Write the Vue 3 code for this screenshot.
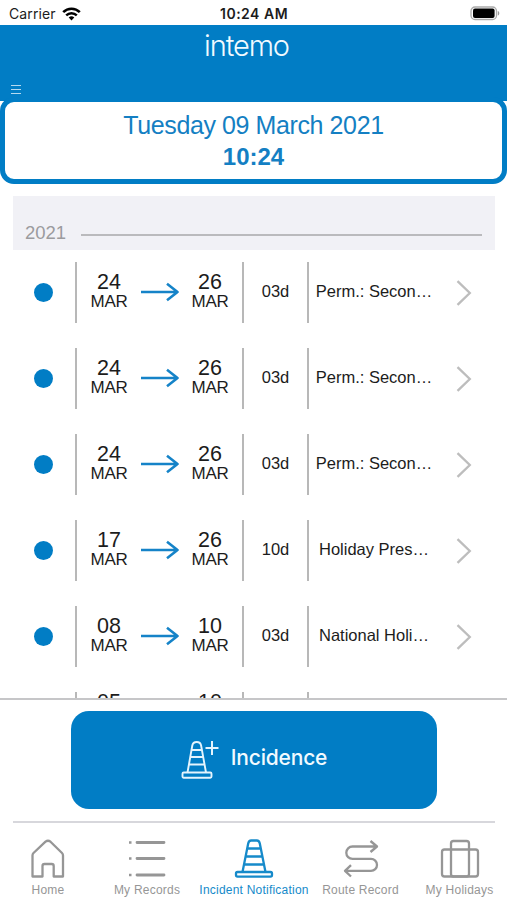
<script setup>
const incidents = [
  { from: '24', to: '26', fromMonth: 'MAR', toMonth: 'MAR', days: '03d', label: 'Perm.: Secon…' },
  { from: '24', to: '26', fromMonth: 'MAR', toMonth: 'MAR', days: '03d', label: 'Perm.: Secon…' },
  { from: '24', to: '26', fromMonth: 'MAR', toMonth: 'MAR', days: '03d', label: 'Perm.: Secon…' },
  { from: '17', to: '26', fromMonth: 'MAR', toMonth: 'MAR', days: '10d', label: 'Holiday Pres…' },
  { from: '08', to: '10', fromMonth: 'MAR', toMonth: 'MAR', days: '03d', label: 'National Holi…' },
]
</script>

<template>
  <div class="screen">
    <div class="status">
      <div class="carrier">
        <span>Carrier</span>
        <svg width="19" height="14" viewBox="0 0 19 14" fill="none" stroke="#000">
          <path d="M1.2 5.2a11.8 11.8 0 0 1 16.6 0" stroke-width="2.6" />
          <path d="M4.2 8.4a7.5 7.5 0 0 1 10.6 0" stroke-width="2.4" />
          <path d="M9.5 13.6l-2.8-3a4 4 0 0 1 5.6 0z" fill="#000" stroke="none" />
        </svg>
      </div>
      <div class="clock">10:24 AM</div>
      <svg class="battery" width="31" height="15" viewBox="0 0 31 15">
        <rect x="2" y="1" width="25.500" height="12.500" rx="4" fill="#fff" stroke="#aaa" stroke-width="1.3" />
        <rect x="4" y="2.600" width="21.600" height="9.300" rx="2" fill="#000" />
        <path d="M28.800 5c2 .6 2 4 0 4.600z" fill="#999" />
      </svg>
    </div>

    <header class="header">
      <div class="logo">intemo</div>
      <svg class="menu" width="10" height="11" viewBox="0 0 10 11" stroke="#b5daf0" stroke-width="1">
        <path d="M0 .5h10M0 4.500h10M0 8.500h10" />
      </svg>
    </header>

    <section class="now">
      <div class="date">Tuesday 09 March 2021</div>
      <div class="time">10:24</div>
    </section>

    <div class="year"><span>2021</span><i></i></div>

    <main class="list">
      <div v-for="(item, i) in incidents" :key="i" class="row">
        <div class="dot-cell"><span class="dot"></span></div>
        <div class="range">
          <div class="day"><b>{{ item.from }}</b><span>{{ item.fromMonth }}</span></div>
          <svg class="arrow" width="38" height="20" viewBox="0 0 38 20" fill="none" stroke="#1583c8" stroke-width="2.600">
            <path d="M0 10h36M26 1.800L36.500 10L26 18.200" stroke-linejoin="round" />
          </svg>
          <div class="day"><b>{{ item.to }}</b><span>{{ item.toMonth }}</span></div>
        </div>
        <div class="days">{{ item.days }}</div>
        <div class="kind">{{ item.label }}</div>
        <svg class="chevron" width="16" height="26" viewBox="0 0 16 26" fill="none" stroke="#bdbdbd" stroke-width="2.300">
          <path d="M1.500 1.200L13.800 13L1.500 24.800" />
        </svg>
      </div>
      <div class="row partial">
        <div class="dot-cell"></div>
        <div class="range">
          <div class="day"><b>05</b></div>
          <span class="arrow"></span>
          <div class="day"><b>10</b></div>
        </div>
        <div class="days"></div>
        <div class="kind"></div>
      </div>
    </main>

    <div class="action">
      <button class="button">
        <svg width="38" height="40" viewBox="0 0 38 40" fill="none" stroke="#e4f4fd" stroke-width="1.900" stroke-linejoin="round">
          <path d="M6.500 32.500L11.300 5.500Q11.900 2 15.700 2Q19.500 2 20.100 5.500L25 32.500M11 10H20.500M10 17H21.700M8.500 24.500H23.200" />
          <rect x="1.500" y="32.500" width="29" height="5.300" rx="1.200" />
          <path d="M31 1v14M24.500 8h13" stroke-width="2" />
        </svg>
        <span>Incidence</span>
      </button>
    </div>

    <nav class="tabs">
      <div class="tab home">
        <svg width="36" height="40" viewBox="0 0 36 40">
          <path d="M2.500 37.500V16.500Q2.500 15 3.500 14L15.500 2.700Q18 .8 20.500 2.700L32 14Q33 15 33 16.500V37.500H23.700V27Q23.700 25 21.700 25H14.500Q12.500 25 12.500 27V37.500Z" />
        </svg>
        <span>Home</span>
      </div>
      <div class="tab records">
        <svg width="38" height="40" viewBox="0 0 38 40">
          <path d="M9 3.500H36M9 19.500H36M9 36H36" stroke-width="2.800" stroke-linecap="round" />
          <path d="M1 3.500h2.500M1 19.500h2.500M1 36h2.500" stroke-width="2.400" />
        </svg>
        <span>My Records</span>
      </div>
      <div class="tab incident active">
        <svg width="40" height="40" viewBox="0 0 40 40">
          <path d="M8.500 33L14.200 4.500Q14.800 1.500 17.200 1.500H22.800Q25.200 1.500 25.800 4.500L31.500 33M13.500 9.500H26.500M12 17.500H28M10.500 25.500H29.700" />
          <rect x="2" y="33" width="36" height="4.600" rx="1.500" />
        </svg>
        <span>Incident Notification</span>
      </div>
      <div class="tab route">
        <svg width="38" height="40" viewBox="0 0 38 40">
          <path d="M34 7.500H10.500A6.200 6.200 0 0 0 10.500 19.900H29A6 6 0 0 1 29 31.900H4M28.500 2L35 7.500L28.500 13M9 26.200L3 31.900L9 37.500" />
        </svg>
        <span>Route Record</span>
      </div>
      <div class="tab holidays">
        <svg width="40" height="40" viewBox="0 0 40 40">
          <rect x="2" y="10.500" width="36" height="27" rx="2.500" />
          <rect x="11" y="2" width="18" height="35.500" rx="2.500" />
        </svg>
        <span>My Holidays</span>
      </div>
    </nav>
  </div>
</template>

<style>
body {
  margin: 0;
  background: #fff;
}
</style>

<style scoped>
.screen {
  width: 507px;
  height: 900px;
  overflow: hidden;
  display: flex;
  flex-direction: column;
  background: #fff;
  font-family: "Liberation Sans", Arial, sans-serif;
  color: #1c1c1c;
}
.status {
  height: 25px;
  flex: none;
  display: grid;
  grid-template-columns: 1fr 69px 1fr;
  align-items: center;
  padding: 2px 7px 0 9px;
  box-sizing: border-box;
  font: 14px/20px Inter, sans-serif;
}
.carrier {
  display: flex;
  align-items: center;
  gap: 6px;
  letter-spacing: 0.1px;
}
.clock {
  font-weight: 600;
  font-size: 14px;
  letter-spacing: 0.5px;
  white-space: nowrap;
}
.battery {
  justify-self: end;
}
.header {
  height: 76px;
  flex: none;
  background: #017dc5;
  display: flex;
  flex-direction: column;
}
.logo {
  height: 60px;
  padding: 4px 14px 0 0;
  box-sizing: border-box;
  text-align: center;
  font: 350 29px/34px Inter, sans-serif;
  letter-spacing: -1.1px;
  color: #f1faff;
}
.menu {
  margin-left: 11px;
}
.now {
  flex: none;
  height: 87px;
  margin-top: -4px;
  box-sizing: border-box;
  border: 5px solid #017dc5;
  border-radius: 14px;
  background: #fff;
  color: #147fc3;
  text-align: center;
}
.date {
  padding-top: 8px;
  font-size: 25px;
  line-height: 30px;
  letter-spacing: -0.4px;
}
.time {
  font-size: 24px;
  line-height: 33px;
  font-weight: 700;
}
.year {
  flex: none;
  height: 54px;
  margin: 12px 12px 0 13px;
  padding: 20px 13px 0 12px;
  box-sizing: border-box;
  background: #f1f1f6;
  display: flex;
  align-items: center;
  gap: 15px;
  font-size: 18.5px;
  color: #9b9b9e;
}
.year i {
  flex: 1;
  height: 2px;
  margin-top: 3px;
  background: #bababd;
}
.list {
  flex: none;
  height: 449px;
  margin-top: -1px;
  overflow: hidden;
}
.row {
  height: 86px;
  display: flex;
  align-items: center;
}
.dot-cell {
  width: 75px;
  padding-left: 34px;
  box-sizing: border-box;
}
.dot {
  display: block;
  width: 19px;
  height: 19px;
  border-radius: 50%;
  background: #017dc5;
}
.range,
.days,
.kind {
  height: 61px;
  box-sizing: border-box;
  border-left: 2px solid #b8b8b8;
}
.range {
  width: 167px;
  padding: 0 13px;
  display: flex;
  justify-content: space-between;
}
.arrow {
  width: 38px;
  margin-top: 20px;
  flex: none;
}
.day {
  width: 38px;
  padding-top: 10px;
  display: flex;
  flex-direction: column;
  align-items: center;
}
.day b {
  font-weight: 400;
  font-size: 21.5px;
  line-height: 21px;
}
.day span {
  font-size: 17px;
  line-height: 17px;
  letter-spacing: -0.3px;
}
.partial .day {
  padding-top: 0;
}
.days {
  width: 65px;
  text-align: center;
  font-size: 16.5px;
  line-height: 59px;
}
.kind {
  width: 134px;
  padding-right: 2px;
  text-align: center;
  font-size: 16.5px;
  line-height: 59px;
  white-space: nowrap;
}
.chevron {
  margin: 2px 0 0 15px;
}
.action {
  flex: none;
  height: 123px;
  border-top: 2px solid #c6c6c8;
  padding: 11px 70px 12px 71px;
  box-sizing: border-box;
}
.button {
  width: 366px;
  height: 98px;
  border: 0;
  border-radius: 18px;
  background: #017dc5;
  color: #f1faff;
  display: flex;
  align-items: center;
  justify-content: center;
  gap: 12px;
  padding: 0;
  font: 500 21px/26px Inter, sans-serif;
  letter-spacing: -0.2px;
}
.button span {
  margin-top: -4px;
}
.tabs {
  flex: 1;
  margin: 0 12px 0 13px;
  border-top: 2px solid #d7d7dc;
  display: grid;
  grid-template-columns: 70px 128px 86px 127px 71px;
  padding-top: 16px;
}
.tab {
  display: flex;
  flex-direction: column;
  align-items: center;
  gap: 4px;
  color: #969696;
  font-size: 12px;
  line-height: 14px;
  letter-spacing: 0.22px;
  white-space: nowrap;
}
.tab svg {
  fill: none;
  stroke: currentColor;
  stroke-width: 2.3;
  stroke-linejoin: round;
  flex: none;
}
.active {
  color: #168aca;
}
</style>
